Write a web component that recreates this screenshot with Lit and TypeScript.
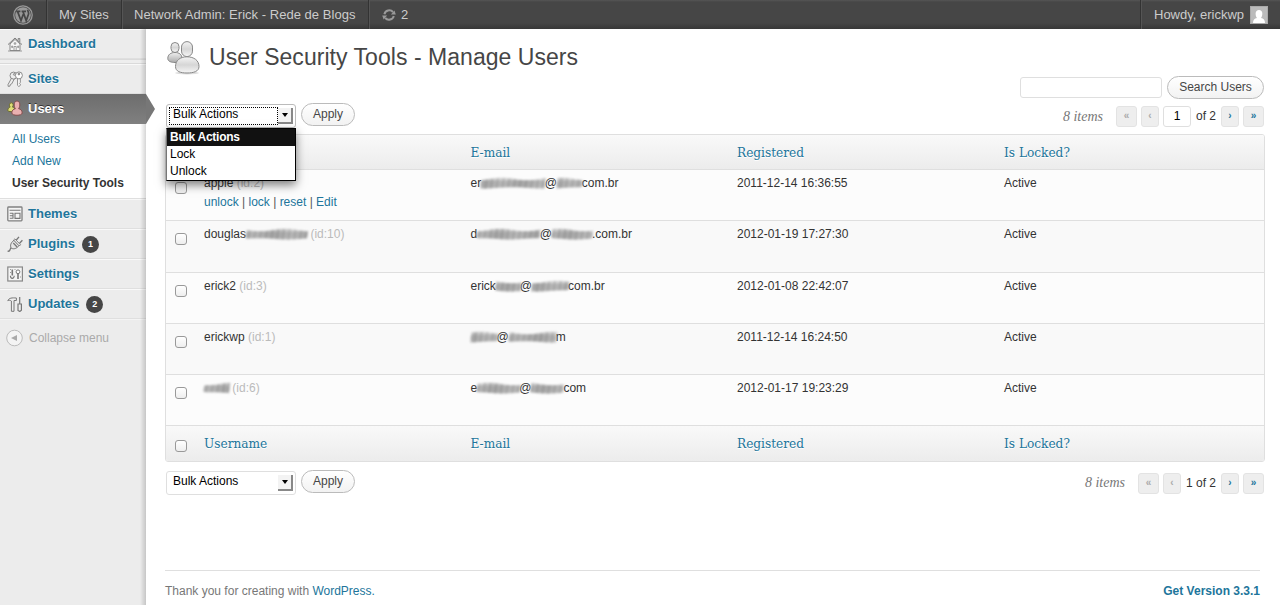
import { LitElement, html, svg, css, nothing } from "lit";
import { customElement } from "lit/decorators.js";
import { classMap } from "lit/directives/class-map.js";

type Smudge = { w: number; seed: number };
type Part = string | Smudge;

const s = (w: number, seed = 1): Smudge => ({ w, seed });

interface Row {
  name: Part[];
  id: number;
  email: Part[];
  registered: string;
  actions?: boolean;
}

const rows: Row[] = [
  { name: ["apple"], id: 2, email: ["er", s(63.5, 1), "@", s(25, 2), "com.br"], registered: "2011-12-14 16:36:55", actions: true },
  { name: ["douglas", s(61, 3)], id: 10, email: ["d", s(62.5, 4), "@", s(40, 5), ".com.br"], registered: "2012-01-19 17:27:30" },
  { name: ["erick2"], id: 3, email: ["erick", s(24, 6), "@", s(36, 7), "com.br"], registered: "2012-01-08 22:42:07" },
  { name: ["erickwp"], id: 1, email: [s(26, 8), "@", s(47, 9), "m"], registered: "2011-12-14 16:24:50" },
  { name: [s(25, 10)], id: 6, email: ["e", s(42, 11), "@", s(32, 12), "com"], registered: "2012-01-17 19:23:29" },
];

// A soft grey scribble that hides part of a name or an address.
const smudge = ({ w, seed }: Smudge) => {
  const full = w + 4;
  const strokes = [];
  for (let x = 2; x < full - 1.5; x += 1.5) {
    const a = 4 + Math.sin(x / 8 + seed * 2) * 1.2;
    const b = 12.8 + Math.sin(x / 9 + seed) * 1;
    const o = 0.2 + (Math.sin(x * 1.1 + seed) + 1) * 0.12 + (Math.sin(x / 6 + seed) + 1) * 0.08;
    strokes.push(svg`<path d="M${x + 1.4} ${a}L${x} ${b}" stroke="#777" stroke-width="1.7" opacity=${o} />`);
  }
  return html`<svg class="smudge" width=${full} height="17" viewBox="0 0 ${full} 17">
    <rect x="1.5" y="5.5" width=${full - 3} height="7" rx="3" fill="#bbb" opacity=".7" />
    ${strokes}
  </svg>`;
};

const parts = (list: Part[]) => list.map((p) => (typeof p === "string" ? p : smudge(p)));

const icons = {
  wp: svg`<g fill="none" stroke="#999"><circle cx="10" cy="10" r="9.2" stroke-width="1.3"/></g>
    <circle cx="10" cy="10" r="7.8" fill="#999"/>
    <path d="M3.2 6.4h4.2M4.6 6.6 8 15.6l2.2-6.2M8.6 6.4h4.4M10 6.6l3.2 9 2.3-6.4c.7-2-.9-2.7-.9-4.4" fill="none" stroke="#464646" stroke-width="1.7"/>`,
  dashboard: svg`<path d="M3 8 8 3.4 13 8v6.500H3z" fill="#f8f8f8" stroke="#888"/>
    <path d="M1 8.600 8 2l7 6.600M12.800 6V2.500h-1.600v2" fill="none" stroke="#808080" stroke-width="1"/>
    <path d="M7 14.500v-4h2.200v4M4.700 10h1v1.600h-1zM10.700 10h1v1.600h-1zM7.200 6.800h1.600v1.400H7.200zM1 15h14" fill="none" stroke="#888" stroke-width=".8"/>`,
  sites: svg`<g fill="#eee" stroke="#808080" stroke-width=".9"><path d="M4.600 7 1 13.600l.2 1.800 1.800-.3.300-1.600 1.400-.6 2.600-5z"/><circle cx="6.500" cy="4.600" r="3.500"/><circle cx="7.300" cy="3.400" r=".9"/>
    <path fill="#fff" d="M10.600 6v8.400l1.200 1.100 1.500-1.100v-1.200l-.8-.9.800-.9V6z"/><circle cx="11.900" cy="4.400" r="3.500" fill="#fff"/><circle cx="11.900" cy="3" r=".9" fill="#999"/></g>`,
  users: svg`<g stroke-width="1"><path d="M.8 10.500c0-2 1-3 2.300-3.400C1.900 5.500 2.400 2.800 4.300 2.800s2.400 2.700 1.200 4.300C7 7.500 8 8.500 8 10.500c0 1.500-7.200 1.500-7.200 0z" fill="#dede78" stroke="#6c6b2e"/>
    <path d="M4.800 13c0-2.500 1.500-3.900 3.600-4.300C6.400 6 6.800 1 10 1s3.600 5 1.600 7.700c2.100.4 3.600 1.800 3.600 4.300 0 3-10.400 3-10.400 0z" fill="#eab0b0" stroke="#854e4e"/></g>`,
  themes: svg`<rect x=".8" y="1" width="14.2" height="13.800" rx=".8" fill="#f4f4f4" stroke="#808080" stroke-width="1.300"/><path d="M2.500 4.200h11M8 7.200h5v5.200H8zM2.800 7.300h3.500M2.800 9.800h3.500M2.800 12.300h3.500M6 7v5.600" fill="none" stroke="#777" stroke-width="1.100"/>`,
  plugins: svg`<path d="M.6 15.200c3.400.6 1.600-2.200 3.600-3.400" fill="none" stroke="#777" stroke-width="1.300"/><path d="M4.200 12.200C2.800 9.400 3.800 6.800 7 4.200l5.200 5.400C9.700 12.400 7 13.600 4.200 12.200z" fill="#e6e6e6" stroke="#777"/><path d="M6.600 4 7.800 2.900 13.500 8.800l-1.200 1.200z" fill="#fff" stroke="#777"/><path d="M9.300 4 12 .9M12.600 7.200 15.400 4.300M6.300 7l3.800 4" fill="none" stroke="#777" stroke-width="1.300"/>`,
  settings: svg`<rect x=".8" y="1" width="14.6" height="14" fill="#f4f4f4" stroke="#888" stroke-width="1.2"/><path d="M5.300 3.500v6M11 8v5" stroke="#777" stroke-width="1.6"/><path d="M3.400 9.800c0 3.400 3.800 3.400 3.800 0" fill="none" stroke="#777" stroke-width="1.100"/><circle cx="11" cy="5.800" r="1.900" fill="#fff" stroke="#777"/><path d="M3 3.500h1M7.500 3.500h1M3 6.500h1M13 11h1" stroke="#999"/>`,
  updates: svg`<path d="M.8 4.700C2 1.800 5 1.700 9.400 2v2.500H7V15.300H4.400V5C3 4 2 4.300.8 4.700z" fill="#eee" stroke="#777"/><path d="M12.700 1v6.500M11 8h3.400v6.300l-1.600 1.200L11 14.400z" fill="#eee" stroke="#777" stroke-width="1.200"/>`,
  refresh: svg`<g fill="none" stroke="#999" stroke-width="2"><path d="M2.400 6.200A5 5 0 0 1 11 4"/><path d="M11.800 7.900A5 5 0 0 1 3.200 10"/></g><path d="M13.800 6.600H8.900l3.600-4.200zM.2 7.400h5L1.600 11.600z" fill="#999"/>`,
};

const icon = (name: keyof typeof icons, w = 16, h = 16, vb = "0 0 16 16") =>
  html`<svg class="icon" width=${w} height=${h} viewBox=${vb}>${icons[name]}</svg>`;

@customElement("app-root")
export class AppRoot extends LitElement {
  static styles = css`
    :host { display: block; height: 605px; overflow: hidden; background: #fff; color: #333;
      font: 12px/17px "Liberation Sans", Arial, sans-serif; }
    * { box-sizing: border-box; }
    svg { display: block; flex: none; }
    a { color: #21759b; text-decoration: none; }
    .bar { display: flex; height: 29px; color: #ccc; font-size: 13px; line-height: 28px; text-shadow: 0 -1px 0 #444;
      background: linear-gradient(#555 0, #464646 2px, #464646 23px, #373737 29px); }
    .bar > div { display: flex; align-items: center; height: 29px; border-right: 1px solid #333; box-shadow: 1px 0 0 #555; }
    .logo { width: 47px; padding-left: 13px; }
    .mysites { width: 75px; padding-left: 12px; }
    .admin { width: 247px; padding-left: 12px; letter-spacing: .03px; }
    .upd { width: 772px; padding-left: 13px; gap: 5px; }
    .bar .me { border: 0; box-shadow: none; flex: 1; padding-left: 13px; gap: 6px; white-space: nowrap; }
    .avatar { border: 1px solid #aaa; background: #bbb; }
    .body { display: flex; height: 576px; }
    .menu { width: 146px; flex: none; background: #ececec; position: relative; }
    .menu::after { content: ""; position: absolute; right: 0; top: 0; bottom: 0; width: 6px;
      background: linear-gradient(90deg, rgba(0,0,0,0), rgba(0,0,0,.16)); }
    .item { display: flex; align-items: center; height: 30px; padding: 0 0 1px 7px; gap: 5px; font-size: 13px; font-weight: bold;
      color: #21759b; border-top: 1px solid #f9f9f9; border-bottom: 1px solid #dfdfdf; text-shadow: 0 1px 0 #fff; }
    .sep { height: 5px; border: 1px solid #dadada; border-width: 1px 0; background: #eee; }
    .current { background: linear-gradient(#6d6d6d, #808080); border: 0; color: #fff; text-shadow: 0 -1px 0 #333; position: relative; z-index: 2; padding-bottom: 2px; }
    .current::after { content: ""; position: absolute; left: 146px; top: 0; border: solid transparent; border-width: 15px 0 15px 9px; border-left-color: #777; }
    .sub { display: flex; flex-direction: column; height: 75px; padding: 4px 0 0 12px; background: #fff; line-height: 22px; border-bottom: 1px solid #dfdfdf; }
    .sub b { color: #333; }
    .badge { display: grid; place-items: center; width: 17px; height: 17px; border-radius: 9px; background: #464646; color: #fff;
      font-size: 9px; line-height: 17px; text-shadow: none; margin: 1px 0 0 2px; }
    .collapse { display: flex; align-items: center; gap: 5px; height: 37px; padding-left: 6px; color: #aaa; border-top: 1px solid #f4f4f4; }
    .main { flex: 1; display: flex; flex-direction: column; padding: 0 15px 0 19px; }
    .head { display: flex; height: 46px; padding-left: 2px; }
    .head svg { margin-top: 12px; }
    h1 { margin: 14px 0 0 8px; font: 23px/29px "Liberation Sans", Arial, sans-serif; letter-spacing: .04px; color: #464646; }
    .search { display: flex; justify-content: flex-end; align-items: center; gap: 5px; height: 25px; padding-right: 1px; }
    .field { width: 142px; height: 21px; border: 1px solid #dfdfdf; border-radius: 3px; background: #fff; }
    .btn { height: 23px; border: 1px solid #bbb; border-radius: 12px; background: linear-gradient(#fff, #f2f2f2); color: #464646; text-align: center; line-height: 20px; }
    .find { width: 97px; }
    .apply { width: 54px; margin-bottom: 3px; }
    .nav { display: flex; align-items: center; padding: 0 1px; }
    .nav.top { height: 34px; padding-bottom: 2px; }
    .nav.bottom { height: 41px; }
    .select { position: relative; display: flex; width: 130px; height: 24px; margin-right: 5px; border: 1px solid #dfdfdf; border-radius: 3px; color: #000; background: #fff; padding: 1px 1px 1px 2px; }
    .select.open { border-color: #bbb; }
    .value { flex: 1; padding-left: 3px; line-height: 15px; border: 1px dotted transparent; }
    .open .value { border-color: #000; line-height: 13px; margin: 1px 0; }
    .drop { width: 15px; display: grid; place-items: center; border: solid #888; border-width: 0 2px 2px 0; margin: 2px 1px 2px 0; background: #f3f3f3; }
    .drop::after { content: ""; border: 3.5px solid transparent; border-top: 4px solid #000; border-bottom: 0; }
    .list { position: absolute; z-index: 5; left: -1px; top: 23px; width: 130px; border: 1px solid #000; border-left-color: #777; background: #fff; box-shadow: 0 4px 9px rgba(0,0,0,.5); }
    .list div { height: 17px; line-height: 17px; padding-left: 3px; }
    .list .on { background: #111; color: #fff; font-weight: bold; letter-spacing: -.27px; }
    .pages { display: flex; align-items: center; gap: 4px; margin-left: auto; margin-top: 1px; height: 21px; }
    .pages i { font: italic 14px/20px "Liberation Serif", serif; color: #777; margin-right: 9px; }
    .pg { width: 18px; height: 21px; border: 1px solid #e3e3e3; border-radius: 3px; background: #eee; color: #aaa; font-size: 10px; font-weight: bold; line-height: 18px; text-align: center; }
    .pg.w { width: 21px; }
    .pg.act { color: #21759b; }
    .num { width: 28px; height: 21px; border: 1px solid #dfdfdf; border-radius: 3px; text-align: center; color: #000; line-height: 19px; }
    .of { margin: 0 1px; }
    .table { border: 1px solid #dfdfdf; border-radius: 3px; overflow: hidden; }
    .tr { display: grid; grid-template-columns: 38px 266.5px 266.5px 267px 1fr; height: 51px; border-bottom: 1px solid #dfdfdf; background: #fcfcfc; }
    .tr.alt { background: #f9f9f9; }
    .tr:nth-child(3) { height: 52px; }
    .th { height: 35px; background: linear-gradient(#f9f9f9, #ececec); font: 13.5px/34px "DejaVu Serif Condensed", "DejaVu Serif", serif; color: #21759b; text-shadow: 0 1px 0 #fff; }
    .th.foot { border-bottom: 0; }
    .check { width: 12px; height: 12px; margin: 12px 0 0 9px; border: 1px solid #999; border-radius: 3px; background: linear-gradient(#fff, #eee); }
    .th .check { margin-top: 14px; }
    .line { display: flex; height: 17px; margin-top: 5px; white-space: pre; }
    .id { color: #bbb; }
    .acts { color: #555; line-height: 20px; }
    .smudge { filter: blur(.8px); margin: 0 -2px; }
    .foot-note { display: flex; justify-content: space-between; margin: 67px 5px 0 0; border-top: 1px solid #dfdfdf; padding-top: 12px; color: #777; }
  `;

  private item(name: keyof typeof icons, label: string, badge?: number, current = false) {
    return html`<div class=${classMap({ item: true, current })}>${icon(name)}<span>${label}</span>${badge ? html`<span class="badge">${badge}</span>` : nothing}</div>`;
  }

  private bulk(open: boolean) {
    return html`<div class=${classMap({ select: true, open })}><span class="value">Bulk Actions</span><span class="drop"></span>
        ${open ? html`<div class="list"><div class="on">Bulk Actions</div><div>Lock</div><div>Unlock</div></div>` : nothing}
      </div><div class="btn apply">Apply</div>`;
  }

  private pages(input: boolean) {
    return html`<div class="pages"><i>8 items</i>
      <span class="pg w">«</span><span class="pg">‹</span>
      ${input ? html`<span class="num">1</span><span class="of">of 2</span>` : html`<span class="of">1 of 2</span>`}
      <span class="pg act">›</span><span class="pg w act">»</span></div>`;
  }

  private heading(foot: boolean) {
    return html`<div class=${classMap({ tr: true, th: true, foot })}><span class="check"></span><span>Username</span><span>E-mail</span><span>Registered</span><span>Is Locked?</span></div>`;
  }

  render() {
    return html`
      <div class="bar">
        <div class="logo">${icon("wp", 20, 20, "0 0 20 20")}</div>
        <div class="mysites">My Sites</div>
        <div class="admin">Network Admin: Erick - Rede de Blogs</div>
        <div class="upd">${icon("refresh", 14, 14, "0 0 14 14")}<span>2</span></div>
        <div class="me">Howdy, erickwp
          <svg class="avatar" width="18" height="18" viewBox="0 0 16 16"><path d="M2 16c0-3 1.5-4.5 4-5C4 8.500 3.800 3 8 3s4 5.500 2 8c2.500.5 4 2 4 5z" fill="#fff"/></svg>
        </div>
      </div>
      <div class="body">
        <div class="menu">
          ${this.item("dashboard", "Dashboard")}
          <div class="sep"></div>
          ${this.item("sites", "Sites")}
          ${this.item("users", "Users", undefined, true)}
          <div class="sub"><a>All Users</a><a>Add New</a><b>User Security Tools</b></div>
          ${this.item("themes", "Themes")}
          ${this.item("plugins", "Plugins", 1)}
          ${this.item("settings", "Settings")}
          ${this.item("updates", "Updates", 2)}
          <div class="collapse">
            <svg width="18" height="18" viewBox="0 0 18 18"><circle cx="8.500" cy="9" r="7.800" fill="#f4f4f4" stroke="#bbb"/><path d="M5 9l6-3v6z" fill="#aaa"/></svg>
            <span>Collapse menu</span>
          </div>
        </div>
        <div class="main">
          <div class="head">
            <svg width="34" height="34" viewBox="0 0 34 34">
              <defs><linearGradient id="g" x2="0" y2="1"><stop stop-color="#f4f4f4"/><stop offset=".5" stop-color="#d6d6d6"/><stop offset="1" stop-color="#f6f6f6"/></linearGradient>
              <linearGradient id="d" x2="0" y2="1"><stop stop-color="#f0f0f0"/><stop offset="1" stop-color="#aaa"/></linearGradient></defs>
              <ellipse cx="20" cy="32" rx="12" ry="1.500" fill="#ddd"/>
              <g fill="url(#g)" stroke="#888"><rect x="4" y="1.500" width="8" height="10" rx="4"/><path fill="url(#d)" d="M.8 17.500c0-4 3-6 7.200-6s7 2 7 6c0 3-3.500 4-7 4S.8 20.500.8 17.500z"/>
              <rect x="14.500" y=".6" width="11" height="15" rx="5.500"/><path d="M8.500 25.500c0-6 4.500-9.700 11.500-9.700s12 3.700 12 9.700c0 5-5.500 6.500-12 6.500s-11.500-1.500-11.500-6.500z"/></g>
            </svg>
            <h1>User Security Tools - Manage Users</h1>
          </div>
          <div class="search"><div class="field"></div><div class="btn find">Search Users</div></div>
          <div class="nav top">${this.bulk(true)}${this.pages(true)}</div>
          <div class="table">
            ${this.heading(false)}
            ${rows.map((r, i) => html`<div class=${classMap({ tr: true, alt: i % 2 === 1 })}>
              <span class="check"></span>
              <div><div class="line">${parts(r.name)}<span class="id"> (id:${r.id})</span></div>
                ${r.actions ? html`<div class="acts"><a>unlock</a> | <a>lock</a> | <a>reset</a> | <a>Edit</a></div>` : nothing}</div>
              <div class="line">${parts(r.email)}</div>
              <div class="line">${r.registered}</div>
              <div class="line">Active</div>
            </div>`)}
            ${this.heading(true)}
          </div>
          <div class="nav bottom">${this.bulk(false)}${this.pages(false)}</div>
          <div class="foot-note"><span>Thank you for creating with <a>WordPress.</a></span><a><b>Get Version 3.3.1</b></a></div>
        </div>
      </div>`;
  }
}
